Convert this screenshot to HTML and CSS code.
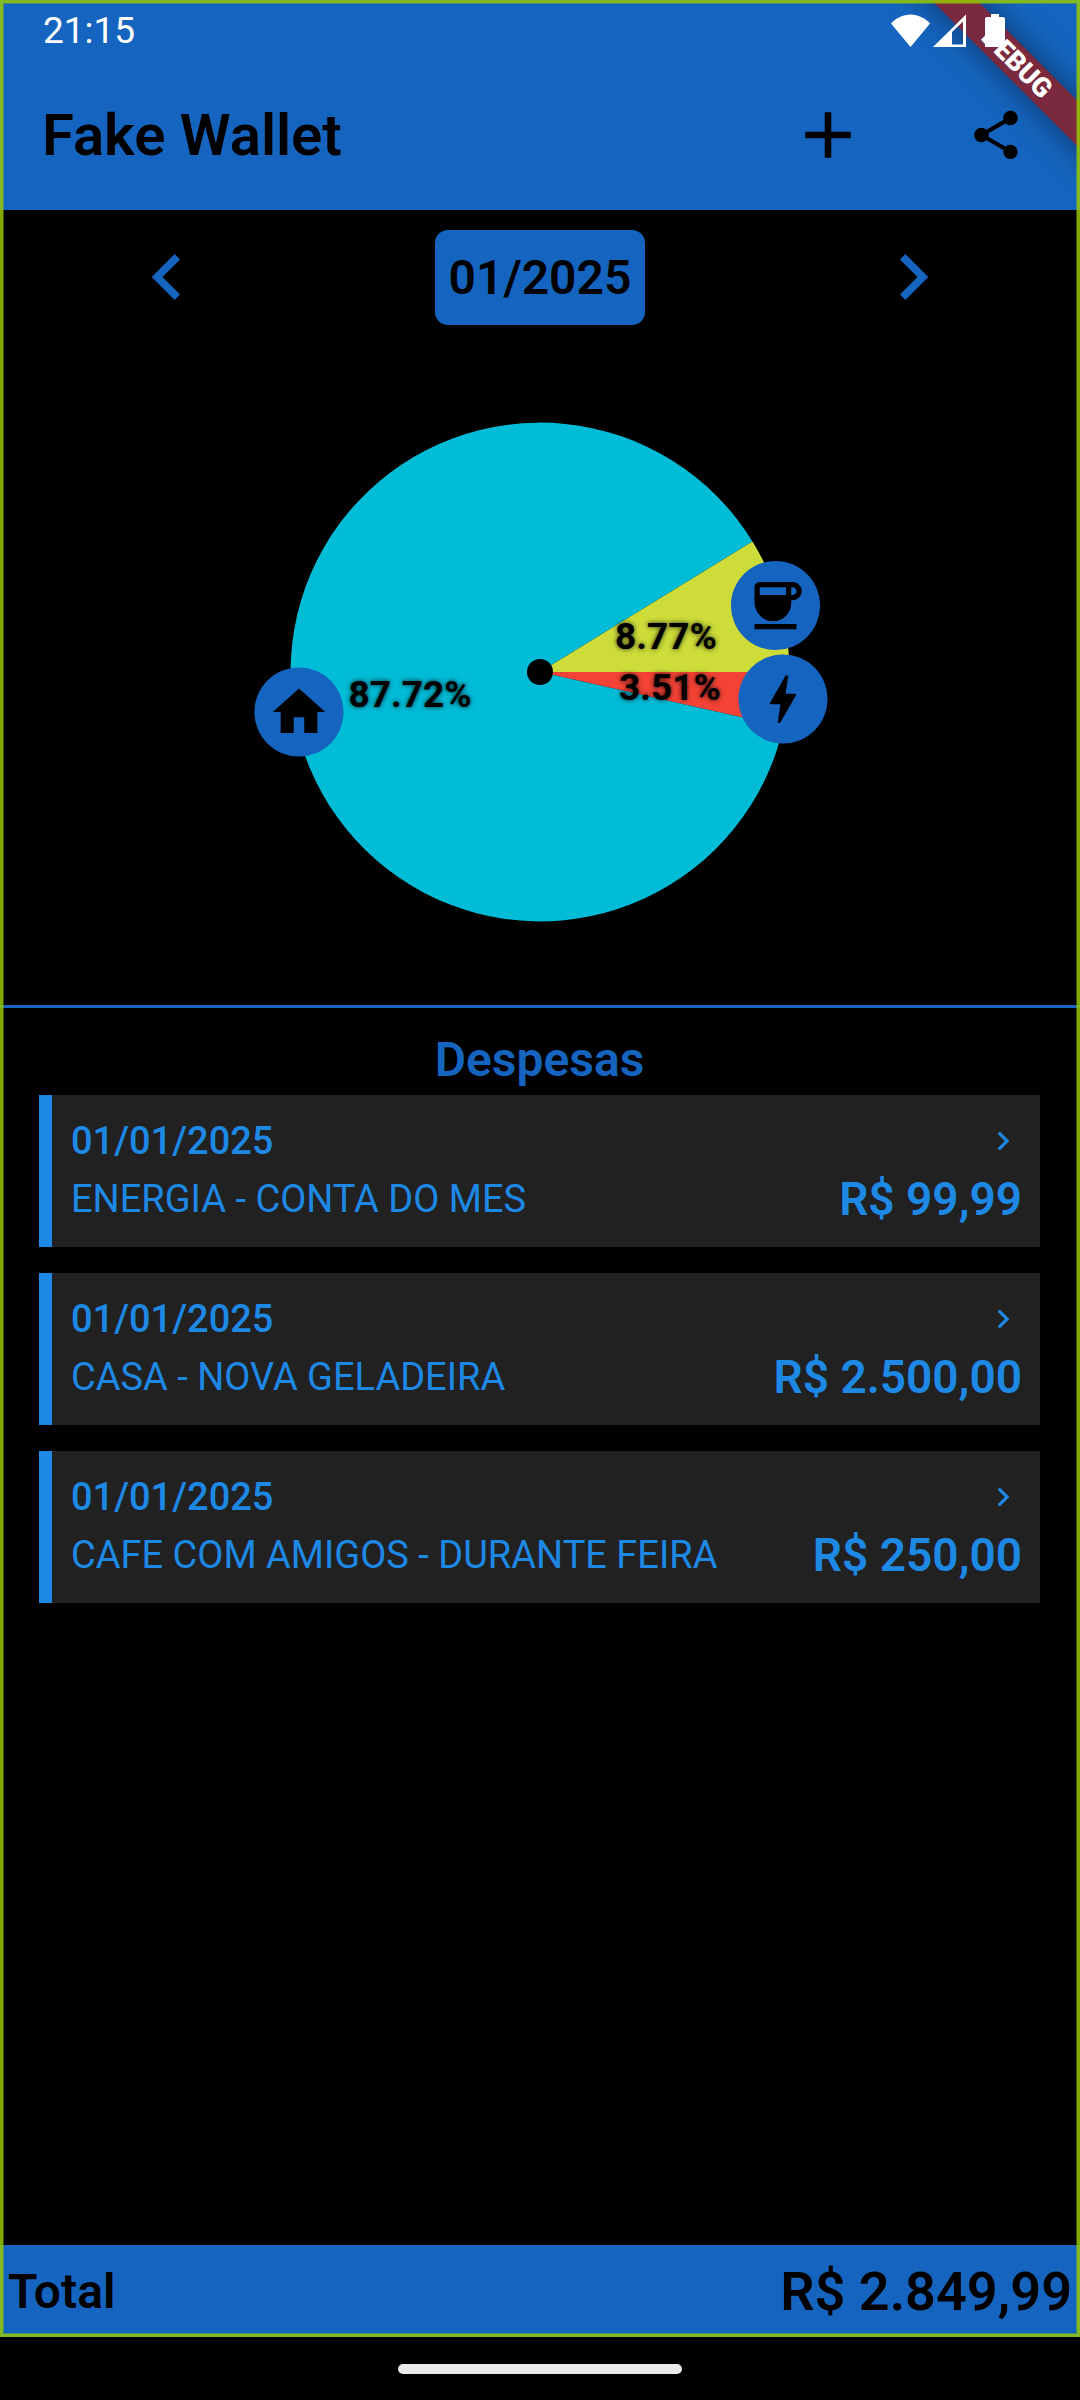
FILE: index.html
```html
<!DOCTYPE html>
<html lang="pt-BR">
<head>
<meta charset="utf-8">
<meta name="viewport" content="width=device-width, initial-scale=1">
<title>Fake Wallet</title>
<link rel="stylesheet" href="styles.css">
</head>
<body>
<div class="app">
  <header class="top">
    <div class="status">
      <time class="clock">21:15</time>
      <svg class="status-icons" width="114" height="34" viewBox="0 0 114 34" aria-hidden="true">
        <path d="M0 9.5C5 4 12 .5 19.500 .5S34 4 39 9.500L19.500 33z"/>
        <path fill-rule="evenodd" d="M42 33L75 .5V33zM61 18v12.500h11V7.500z"/>
        <path d="M100 0h8v3h4q2 0 2 2v28H94V5q0-2 2-2h4z"/>
      </svg>
    </div>
    <div class="bar">
      <h1 class="title">Fake Wallet</h1>
      <div class="actions">
        <button class="action" type="button" aria-label="Adicionar">
          <svg width="78" height="78" viewBox="0 0 24 24"><path d="M19 13h-6v6h-2v-6H5v-2h6V5h2v6h6z"/></svg>
        </button>
        <button class="action" type="button" aria-label="Compartilhar">
          <svg width="58" height="58" viewBox="0 0 24 24"><path d="M18 16.080c-.76 0-1.440.3-1.960.77L8.910 12.700c.05-.23.09-.46.09-.7s-.04-.47-.09-.7l7.050-4.110c.54.5 1.250.81 2.040.81 1.660 0 3-1.340 3-3s-1.340-3-3-3-3 1.340-3 3c0 .24.04.47.09.7L8.040 9.810C7.500 9.310 6.790 9 6 9c-1.660 0-3 1.340-3 3s1.340 3 3 3c.79 0 1.500-.31 2.040-.81l7.120 4.160c-.05.21-.08.43-.08.65 0 1.610 1.310 2.920 2.920 2.920s2.920-1.310 2.920-2.920-1.310-2.920-2.920-2.920z"/></svg>
        </button>
      </div>
    </div>
    <div class="banner">DEBUG</div>
  </header>

  <main class="content">
    <nav class="months">
      <button class="step" type="button" aria-label="Mês anterior">
        <svg width="92" height="92" viewBox="0 0 24 24"><path d="M15.410 7.410L14 6l-6 6 6 6 1.410-1.410L10.830 12z"/></svg>
      </button>
      <button class="month" type="button">01/2025</button>
      <button class="step" type="button" aria-label="Próximo mês">
        <svg width="92" height="92" viewBox="0 0 24 24"><path d="M8.590 16.590L10 18l6-6-6-6-1.410 1.410L13.170 12z"/></svg>
      </button>
    </nav>

    <section class="chart">
      <svg class="pie" viewBox="-300 -260 600 520" role="img" aria-label="Despesas por categoria">
        <path fill="#f44336" d="M0 0L249.400 0A249.400 249.400 0 0 1 243.360 54.560z"/>
        <path fill="#00bcd7" d="M0 0L243.360 54.560A249.400 249.400 0 1 1 212.470 -130.600z"/>
        <path fill="#cddc39" d="M0 0L212.470 -130.600A249.400 249.400 0 0 1 249.400 0z"/>
        <circle r="13"/>
        <g class="share">
          <text x="126" y="-23">8.77%</text>
          <text x="130" y="28">3.51%</text>
          <text x="-130" y="35">87.72%</text>
        </g>
        <g transform="translate(235.500 -66.500)">
          <circle class="badge" r="44.600"/>
          <svg x="-31.500" y="-31.500" width="63" height="63" viewBox="0 0 24 24"><path d="M18.500 3H6C4.900 3 4 3.900 4 5v5.710c0 3.830 2.950 7.180 6.780 7.290 3.960.12 7.220-3.060 7.220-7v-1h.5c1.930 0 3.500-1.570 3.500-3.500S20.430 3 18.500 3zM16 5v3H6V5h10zm2.500 3H18V5h.5c.83 0 1.500.67 1.500 1.500S19.330 8 18.500 8zM4 19h16v2H4z"/></svg>
        </g>
        <g transform="translate(243 27)">
          <circle class="badge" r="44.600"/>
          <svg x="-31.500" y="-31.500" width="63" height="63" viewBox="0 0 24 24"><path d="M11 21h-1l1-7H7.500c-.58 0-.57-.32-.38-.66.19-.34.05-.08.07-.12C8.480 10.940 10.420 7.540 13 3h1l-1 7h3.500c.49 0 .56.33.47.51l-.07.15C12.960 17.550 11 21 11 21z"/></svg>
        </g>
        <g transform="translate(-241 40)">
          <circle class="badge" r="44.600"/>
          <svg x="-31.500" y="-31.500" width="63" height="63" viewBox="0 0 24 24"><path d="M10 20v-6h4v6h5v-8h3L12 3 2 12h3v8z"/></svg>
        </g>
      </svg>
    </section>

    <section class="expenses">
      <h2 class="heading">Despesas</h2>
      <ul class="list">
        <li>
          <a class="card" href="#">
            <span class="row"><span class="date">01/01/2025</span>
              <svg class="go" width="38" height="38" viewBox="0 0 24 24"><path d="M8.590 16.590L10 18l6-6-6-6-1.410 1.410L13.170 12z"/></svg></span>
            <span class="row"><span class="name">ENERGIA - CONTA DO MES</span><span class="price">R$ 99,99</span></span>
          </a>
        </li>
        <li>
          <a class="card" href="#">
            <span class="row"><span class="date">01/01/2025</span>
              <svg class="go" width="38" height="38" viewBox="0 0 24 24"><path d="M8.590 16.590L10 18l6-6-6-6-1.410 1.410L13.170 12z"/></svg></span>
            <span class="row"><span class="name">CASA - NOVA GELADEIRA</span><span class="price">R$ 2.500,00</span></span>
          </a>
        </li>
        <li>
          <a class="card" href="#">
            <span class="row"><span class="date">01/01/2025</span>
              <svg class="go" width="38" height="38" viewBox="0 0 24 24"><path d="M8.590 16.590L10 18l6-6-6-6-1.410 1.410L13.170 12z"/></svg></span>
            <span class="row"><span class="name">CAFE COM AMIGOS - DURANTE FEIRA</span><span class="price">R$ 250,00</span></span>
          </a>
        </li>
      </ul>
    </section>
  </main>

  <footer class="total">
    <span class="total-label">Total</span>
    <span class="total-value">R$ 2.849,99</span>
  </footer>
</div>
<div class="gesture"><span class="handle"></span></div>
</body>
</html>
```
FILE: styles.css
```css
* {
  box-sizing: border-box;
}

body {
  margin: 0;
  min-height: 100vh;
  display: flex;
  flex-direction: column;
  background: #000;
  color: #000;
  font-family: Roboto, "Liberation Sans", sans-serif;
}

button {
  padding: 0;
  border: 0;
  background: none;
  color: inherit;
  font: inherit;
  cursor: pointer;
}

svg {
  display: block;
}

.app {
  position: relative;
  flex: 1;
  display: flex;
  flex-direction: column;
  overflow: hidden;
}

/* window outline drawn over the whole app */
.app::after {
  content: "";
  position: absolute;
  z-index: 3;
  inset: 0;
  border: 3px solid rgba(154, 202, 0, 0.83);
  box-shadow: inset 0 0 0 1px rgba(154, 202, 0, 0.4);
  pointer-events: none;
}

.top {
  position: relative;
  background: #1565c0;
}

.status {
  display: flex;
  justify-content: space-between;
  align-items: center;
  height: 62px;
  padding: 0 75px 0 43px;
}

.clock {
  color: #fff;
  font-size: 37px;
  line-height: 62px;
}

.status-icons {
  position: relative;
  z-index: 2;
  fill: #fff;
}

.bar {
  display: flex;
  justify-content: space-between;
  align-items: center;
  height: 148px;
  padding: 0 21px 2px 42px;
}

.title {
  margin: 0;
  font-size: 58px;
  font-weight: 600;
  line-height: 68px;
}

.actions {
  display: flex;
  gap: 42px;
}

.action {
  display: flex;
  align-items: center;
  justify-content: center;
  width: 126px;
  height: 126px;
}

.banner {
  position: absolute;
  z-index: 1;
  top: 47px;
  right: -137px;
  width: 400px;
  height: 32px;
  transform: rotate(45deg);
  background: #7a293e;
  box-shadow: 0 0 32px rgba(0, 0, 0, 0.5);
  color: #fff;
  font-size: 27px;
  font-weight: 900;
  line-height: 32px;
  text-align: center;
}

.content {
  flex: 1;
}

.months {
  display: flex;
  justify-content: space-around;
  align-items: center;
}

.step {
  padding: 21px;
  fill: #1565c0;
}

.month {
  height: 95px;
  padding: 0 14px;
  border-radius: 13px;
  background: #1565c0;
  font-size: 48px;
  font-weight: 600;
}

.chart {
  padding: 68px 0 73px;
  border-bottom: 3px solid #1565c0;
}

.pie {
  width: 600px;
  max-width: 100%;
  margin: 0 auto;
}

.share {
  font-size: 37px;
  font-weight: 700;
  text-anchor: middle;
  text-shadow: 0 0 5px rgba(0, 0, 0, 0.8);
}

.badge {
  fill: #1565c0;
}

.expenses {
  padding: 24px 40px 24px 39px;
}

.heading {
  margin: 0 0 7px;
  color: #1565c0;
  font-size: 48px;
  font-weight: 600;
  line-height: 56px;
  text-align: center;
}

.list {
  display: flex;
  flex-direction: column;
  gap: 26px;
  margin: 0;
  padding: 0;
  list-style: none;
}

.card {
  display: flex;
  flex-direction: column;
  gap: 8px;
  padding: 22px 18px 22px 19px;
  border-left: 13px solid #1e88e5;
  background: #212121;
  color: #1e88e5;
  fill: #1e88e5;
  font-size: 38px;
  line-height: 48px;
  text-decoration: none;
}

.row {
  display: flex;
  justify-content: space-between;
  align-items: center;
}

.date {
  font-weight: 500;
}

.price {
  font-size: 46px;
  font-weight: 600;
  line-height: 52px;
}

.total {
  display: flex;
  justify-content: space-between;
  align-items: center;
  height: 92px;
  padding: 0 8px;
  background: #1565c0;
}

.total-label {
  font-size: 48px;
  font-weight: 600;
}

.total-value {
  font-size: 54px;
  font-weight: 600;
}

.gesture {
  display: flex;
  align-items: center;
  justify-content: center;
  height: 63px;
}

.handle {
  width: 284px;
  height: 10px;
  border-radius: 5px;
  background: #ebebeb;
}
```
